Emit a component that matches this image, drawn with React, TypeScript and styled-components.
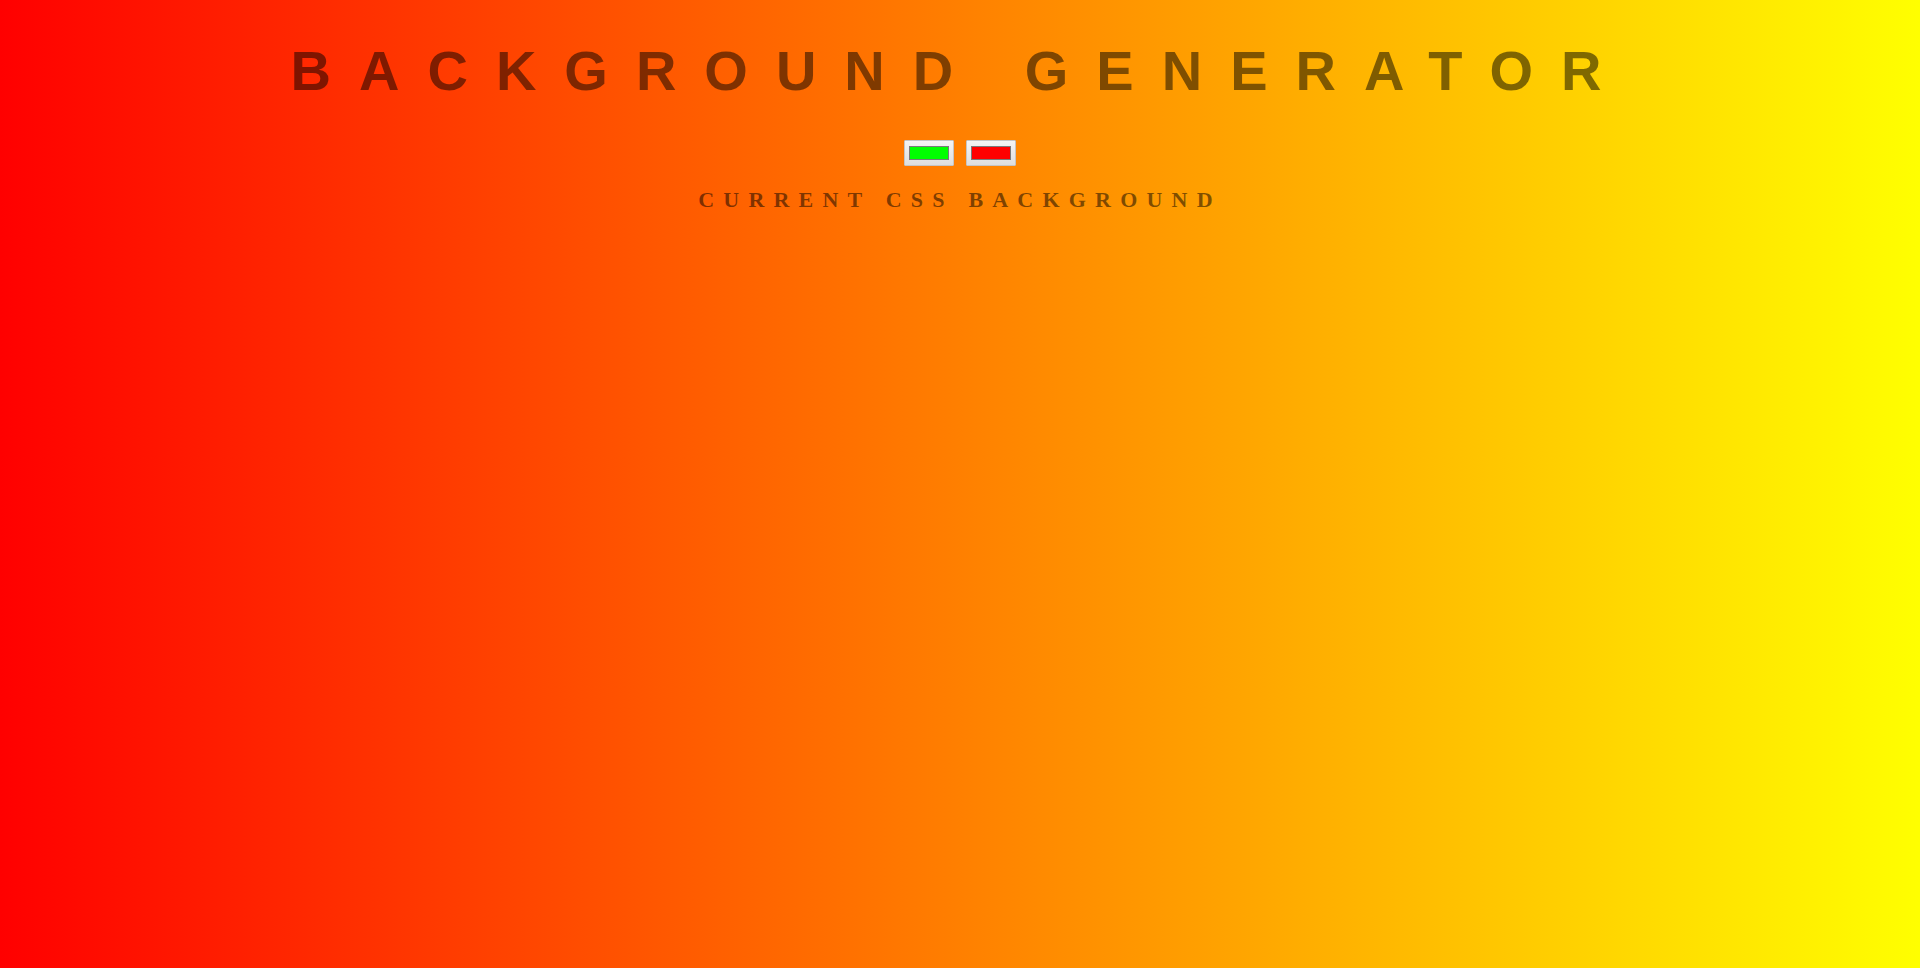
import React, { useState } from "react";
import styled, { createGlobalStyle } from "styled-components";

const GlobalStyle = createGlobalStyle`
  body {
    margin: 0 8px;
    font-family: "Liberation Serif", "Times New Roman", serif;
    font-size: 16px;
    color: rgba(0, 0, 0, 0.5);
    text-align: center;
    text-transform: uppercase;
    letter-spacing: 0.5em;
    background: linear-gradient(to right, red, yellow);
  }
`;

const Title = styled.h1`
  font: 600 3.5em "Liberation Sans", Arial, sans-serif;
  color: rgba(0, 0, 0, 0.5);
  text-align: center;
  text-transform: uppercase;
  letter-spacing: 0.5em;
  width: 100%;
  margin: 0.67em 0;
`;

const Controls = styled.div`
  text-align: center;
`;

const ColorInput = styled.input.attrs({ type: "color" })`
  -webkit-appearance: none;
  appearance: none;
  box-sizing: border-box;
  width: 50px;
  height: 26px;
  padding: 0;
  margin: 0;
  border: 1px solid #c4c4c4;
  border-radius: 1px;
  background: linear-gradient(#f4f4f4, #dedede);
  vertical-align: baseline;
  cursor: pointer;

  &::-webkit-color-swatch-wrapper {
    padding: 5px 4px;
  }

  &::-webkit-color-swatch {
    border: 1px solid #7a7a7a;
    border-radius: 0;
  }
`;

const Subtitle = styled.h3`
  font-size: 22px;
  font-weight: bold;
  letter-spacing: 9.2px;
  margin: 21px 0 16px;
`;

const Output = styled.div`
  min-height: 0;
`;

export default function App() {
  const [c1, setC1] = useState("#00ff00");
  const [c2, setC2] = useState("#ff0000");
  return (
    <>
      <GlobalStyle />
      <Title>Background Generator</Title>
      <Controls>
        <ColorInput value={c1} onChange={(e) => setC1(e.target.value)} />{" "}
        <ColorInput value={c2} onChange={(e) => setC2(e.target.value)} />
      </Controls>
      <Subtitle>Current CSS Background</Subtitle>
      <Output />
    </>
  );
}
